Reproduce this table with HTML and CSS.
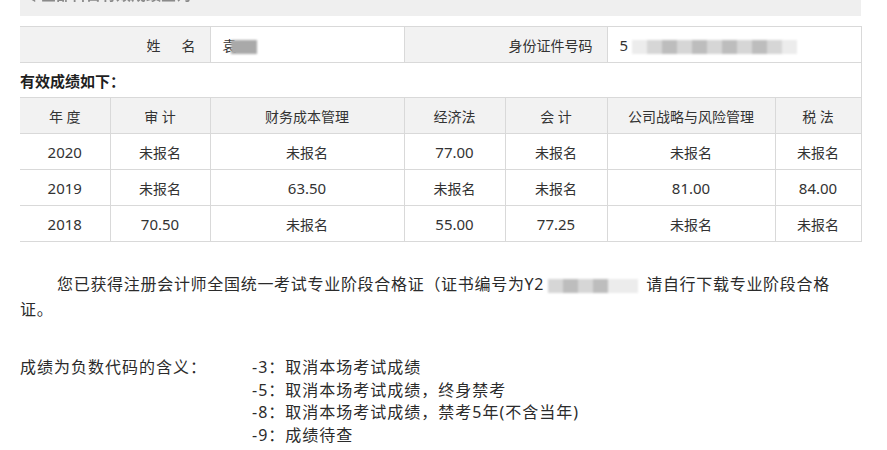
FILE: index.html
```html
<!DOCTYPE html>
<html lang="zh-CN">
<head>
<meta charset="utf-8">
<title>有效成绩查询</title>
<link rel="stylesheet" href="styles.css">
</head>
<body>
<div class="page">
  <div class="titlebar"><div class="title">◀ 全部科目有效成绩查询</div></div>

  <table class="score">
    <colgroup>
      <col class="c1"><col class="c2"><col class="c3"><col class="c4"><col class="c5"><col class="c6"><col class="c7">
    </colgroup>
    <tbody>
      <tr class="info">
        <td class="label" colspan="2">姓&emsp;&ensp;名</td>
        <td class="value">袁<span class="mask mask-name"></span></td>
        <td class="label" colspan="2">身份证件号码</td>
        <td class="value" colspan="2"><span class="num">5</span><span class="mask mask-id"><i class="l"></i><i></i><i class="d"></i><i></i><i class="d"></i><i></i><i class="d"></i><i></i><i class="d"></i><i></i><i class="l"></i></span></td>
      </tr>
      <tr class="caption">
        <td colspan="7">有效成绩如下：</td>
      </tr>
      <tr class="head">
        <td>年 度</td><td>审 计</td><td>财务成本管理</td><td>经济法</td><td>会 计</td><td>公司战略与风险管理</td><td>税 法</td>
      </tr>
      <tr>
        <td class="num">2020</td><td>未报名</td><td>未报名</td><td class="num">77.00</td><td>未报名</td><td>未报名</td><td>未报名</td>
      </tr>
      <tr>
        <td class="num">2019</td><td>未报名</td><td class="num">63.50</td><td>未报名</td><td>未报名</td><td class="num">81.00</td><td class="num">84.00</td>
      </tr>
      <tr>
        <td class="num">2018</td><td class="num">70.50</td><td>未报名</td><td class="num">55.00</td><td class="num">77.25</td><td>未报名</td><td>未报名</td>
      </tr>
    </tbody>
  </table>

  <p class="notice">您已获得注册会计师全国统一考试专业阶段合格证（证书编号为Y2<span class="mask mask-cert"><i></i><i class="d"></i><i></i><i class="d"></i><i class="l"></i><i class="l"></i></span>请自行下载专业阶段合格证。</p>

  <div class="codes">
    <div class="codes-label">成绩为负数代码的含义：</div>
    <ul class="codes-list">
      <li>-3：取消本场考试成绩</li>
      <li>-5：取消本场考试成绩，终身禁考</li>
      <li>-8：取消本场考试成绩，禁考5年(不含当年)</li>
      <li>-9：成绩待查</li>
    </ul>
  </div>
</div>
</body>
</html>
```

FILE: styles.css
```css
* { box-sizing: border-box; }

html, body {
  margin: 0;
  padding: 0;
  background: #ffffff;
}

body {
  font-family: "Noto Sans", "Noto Sans CJK SC", sans-serif;
  color: #333333;
}

.page {
  width: 841px;
  margin-left: 20px;
}

.titlebar {
  height: 16px;
  background: #efefef;
  overflow: hidden;
}

.title {
  margin-top: -16px;
  padding-left: 2px;
  font-size: 15px;
  line-height: 20px;
  font-weight: bold;
  color: #8a8a8a;
  filter: blur(0.6px);
}

.score {
  margin-top: 10px;
  width: 841px;
  border-collapse: collapse;
  table-layout: fixed;
  font-size: 14px;
}

.c1 { width: 90px; }
.c2 { width: 100px; }
.c3 { width: 194px; }
.c4 { width: 101px; }
.c5 { width: 102px; }
.c6 { width: 168px; }
.c7 { width: 86px; }

.score td {
  height: 36px;
  padding: 0;
  border: 1px solid #d9d9d9;
  text-align: center;
  vertical-align: middle;
  white-space: nowrap;
}

.score td.num,
.score .num {
  font-size: 15px;
}

.score tr td:first-child { border-left: none; }

.info .label {
  background: #f2f2f2;
  text-align: right;
  padding-right: 14px;
}

.info .value {
  text-align: left;
  padding-left: 12px;
}

.caption td {
  text-align: left;
  font-weight: bold;
  font-size: 15px;
  color: #1f1f1f;
  height: 35px;
}

.head td {
  background: #f2f2f2;
}

.mask {
  display: inline-flex;
  vertical-align: middle;
  height: 14px;
  filter: blur(0.8px);
}

.mask i {
  display: block;
  width: 15px;
  height: 14px;
  background: #d6d6d6;
}

.mask i.d { background: #bdbdbd; }
.mask i.l { background: #ececec; }

.mask-name {
  width: 26px;
  margin-left: -6px;
  background: #a9a9a9;
}

.mask-id {
  margin-left: 4px;
}

.mask-cert {
  margin: 0 8px 0 4px;
}

.notice {
  margin: 30px 0 0 0;
  padding-right: 20px;
  font-size: 16px;
  line-height: 25px;
  letter-spacing: 0.7px;
  text-indent: 37px;
  color: #2b2b2b;
}

.codes {
  display: flex;
  margin-top: 34px;
  font-size: 16px;
  letter-spacing: 1px;
  line-height: 22.5px;
  color: #2b2b2b;
}

.codes-label {
  width: 232px;
  flex: none;
}

.codes-list {
  list-style: none;
  margin: 0;
  padding: 0;
}
```
